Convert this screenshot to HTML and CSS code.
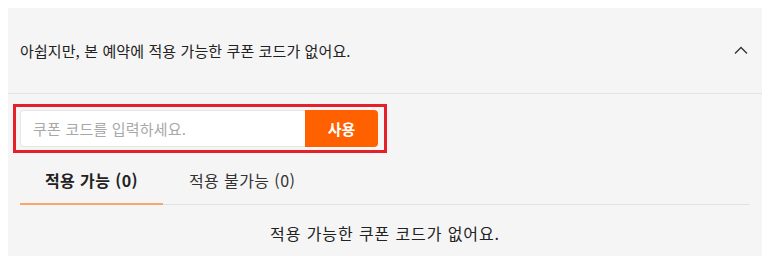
FILE: index.html
```html
<!DOCTYPE html>
<html lang="ko">

<head>
    <meta charset="UTF-8">
    <meta name="viewport" content="width=device-width, initial-scale=1.0">
    <link rel="stylesheet" href="styles.css">
    <title>쿠폰</title>
</head>

<body>
    <div class="coupon">
        <div class="coupon-head">
            <span>아쉽지만, 본 예약에 적용 가능한 쿠폰 코드가 없어요.</span>
            <svg class="chevron" width="14" height="8" viewBox="0 0 14 8">
                <path d="M1 7.5 L7 1.5 L13 7.5" fill="none" stroke="#333" stroke-width="1.3" />
            </svg>
        </div>
        <div class="coupon-body">
            <div class="coderow">
                <input class="codeinput" type="text" placeholder="쿠폰 코드를 입력하세요.">
                <button class="codebtn">사용</button>
                <div class="highlight"></div>
            </div>
            <div class="tabs">
                <div class="tab active">적용 가능 (0)</div>
                <div class="tab">적용 불가능 (0)</div>
            </div>
            <div class="empty">적용 가능한 쿠폰 코드가 없어요.</div>
        </div>
    </div>
</body>

</html>
```

FILE: styles.css
```css
* {
    box-sizing: border-box;
}

body {
    margin: 8px;
    background: #fff;
    font-family: "Noto Sans CJK KR", "Noto Sans", sans-serif;
    color: #222;
}

.coupon {
    width: 754px;
    background: #f5f5f5;
}

.coupon-head {
    display: flex;
    align-items: center;
    justify-content: space-between;
    height: 86px;
    padding: 0 14px 0 12px;
    border-bottom: 1px solid #e4e4e4;
    font-size: 15px;
    letter-spacing: 0.1px;
    color: #222;
}

.chevron {
    display: block;
    margin-top: -2px;
}

.coupon-body {
    padding: 16px 12px 12px;
}

.coderow {
    position: relative;
    display: flex;
    width: 358px;
    height: 37px;
}

.codeinput {
    flex: 1;
    min-width: 0;
    height: 100%;
    border: 1px solid #e6e6e6;
    border-right: none;
    border-radius: 4px 0 0 4px;
    background: #fff;
    padding: 0 12px;
    font-family: inherit;
    font-size: 15px;
    letter-spacing: 0.2px;
    color: #222;
    outline: none;
}

.codeinput::placeholder {
    color: #a8a8a8;
}

.codebtn {
    width: 73px;
    height: 100%;
    border: none;
    border-radius: 0 4px 4px 0;
    background: #ff6000;
    color: #fff;
    font-family: inherit;
    font-size: 15px;
    font-weight: bold;
}

.highlight {
    position: absolute;
    left: -7px;
    top: -6px;
    right: -9px;
    bottom: -6px;
    border: 3px solid #e3202b;
    pointer-events: none;
}

.tabs {
    display: flex;
    margin-top: 11px;
    border-bottom: 1px solid #e2e2e2;
}

.tab {
    padding: 11px 25px 12px;
    line-height: 22px;
    text-align: center;
    font-size: 16px;
    letter-spacing: 0.4px;
    color: #333;
    margin-bottom: -1px;
    border-bottom: 2px solid transparent;
}

.tab + .tab {
    padding-left: 26px;
}

.tab.active {
    font-weight: bold;
    color: #222;
    border-bottom-color: #f7a76a;
}

.empty {
    padding: 17px 0 0;
    line-height: 22px;
    text-align: center;
    font-size: 16px;
    letter-spacing: 0.9px;
    color: #222;
}
```
